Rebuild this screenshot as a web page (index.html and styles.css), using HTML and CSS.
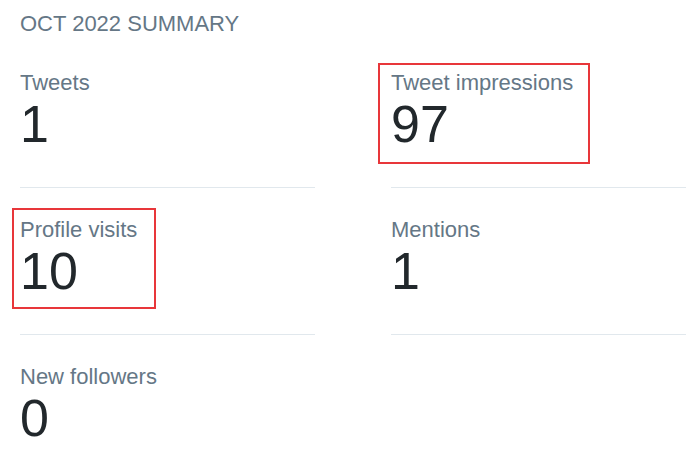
FILE: index.html
```html
<!DOCTYPE html>
<html lang="en">
<head>
  <meta charset="UTF-8" />
  <meta name="viewport" content="width=device-width, initial-scale=1.0" />
  <title>Account Summary</title>
  <link rel="stylesheet" href="styles.css">
</head>
<body>
  <div class="summary">
    <div class="summary-title">OCT 2022 SUMMARY</div>

    <div class="stats-grid">
      <div class="stat">
        <div class="stat-label">Tweets</div>
        <div class="stat-value">1</div>
      </div>
      <div class="stat">
        <div class="mark mark-impressions">
          <div class="stat-label">Tweet impressions</div>
          <div class="stat-value">97</div>
        </div>
      </div>
      <div class="stat">
        <div class="mark mark-visits">
          <div class="stat-label">Profile visits</div>
          <div class="stat-value">10</div>
        </div>
      </div>
      <div class="stat">
        <div class="stat-label">Mentions</div>
        <div class="stat-value">1</div>
      </div>
      <div class="stat">
        <div class="stat-label">New followers</div>
        <div class="stat-value">0</div>
      </div>
    </div>
  </div>
</body>
</html>
```

FILE: styles.css
```css
body {
  font-family: "Liberation Sans", Arial, sans-serif;
  background-color: #fff;
  margin: 0;
}
.summary {
  padding: 11px 0 0 20px;
}
.summary-title {
  font-size: 22px;
  line-height: 26px;
  color: #657786;
  margin-bottom: 4px;
}
.stats-grid {
  display: grid;
  grid-template-columns: 295px 295px;
  column-gap: 76px;
}
.stat {
  padding: 29px 0 35px;
  border-bottom: 1px solid #e1e8ed;
}
.stat-label {
  font-size: 22px;
  line-height: 26px;
  color: #657786;
}
.stat-value {
  font-size: 52px;
  line-height: 56px;
  color: #22282c;
}

/* red highlight boxes, pulled out with negative margins so the grid doesn't move */
.mark {
  display: inline-block;
  border: 2px solid #e8363a;
}
.mark-impressions {
  padding: 5px 15px 10px 11px;
  margin: -7px -17px -12px -13px;
}
.mark-visits {
  padding: 7px 17px 8px 6px;
  margin: -9px -19px -10px -8px;
}
```
